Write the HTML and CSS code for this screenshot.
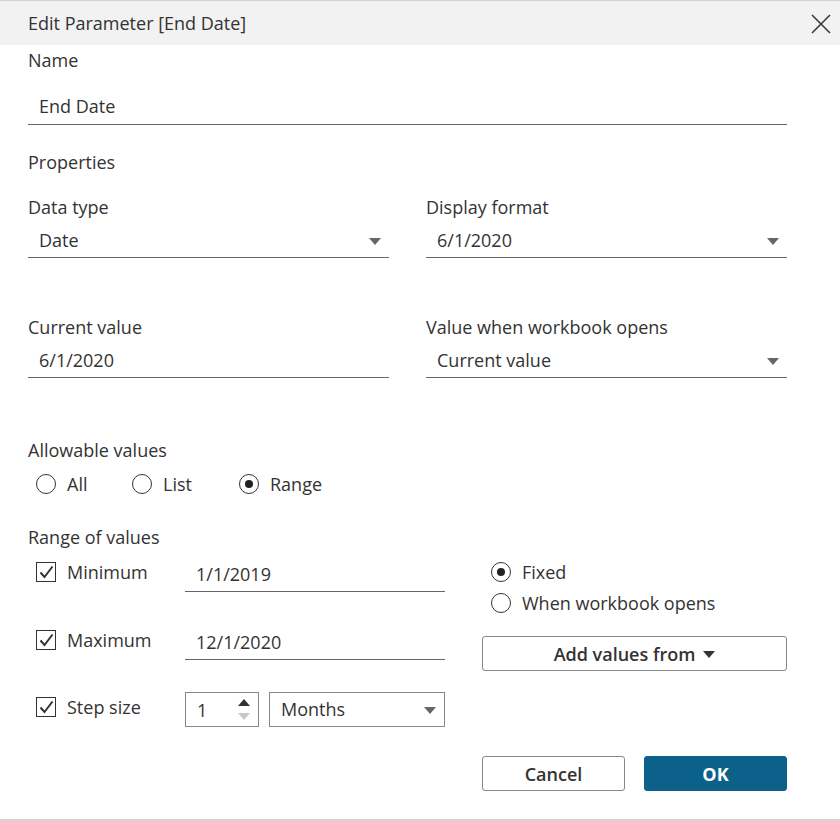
FILE: index.html
```html
<!DOCTYPE html>
<html>
<head>
<meta charset="utf-8">
<link rel="stylesheet" href="styles.css">
</head>
<body>
<div class="dialog">
  <div class="titlebar">
    <span class="title">Edit Parameter [End Date]</span>
    <svg class="close" width="22" height="22" viewBox="0 0 22 22"><path d="M2 2 L20 20 M20 2 L2 20" stroke="#333" stroke-width="1.5" fill="none"/></svg>
  </div>
  <div class="content">
    <div class="label l-name">Name</div>
    <div class="field f-name">End Date</div>
    <div class="label l-props">Properties</div>

    <div class="two-col c1">
      <div>
        <div class="label">Data type</div>
        <div class="field select">Date<span class="caret"></span></div>
      </div>
      <div>
        <div class="label">Display format</div>
        <div class="field select">6/1/2020<span class="caret"></span></div>
      </div>
    </div>

    <div class="two-col c2">
      <div>
        <div class="label">Current value</div>
        <div class="field">6/1/2020</div>
      </div>
      <div>
        <div class="label">Value when workbook opens</div>
        <div class="field select">Current value<span class="caret"></span></div>
      </div>
    </div>

    <div class="label l-allow">Allowable values</div>
    <div class="radios">
      <span class="radio-item"><span class="radio"></span>All</span>
      <span class="radio-item"><span class="radio"></span>List</span>
      <span class="radio-item"><span class="radio on"></span>Range</span>
    </div>

    <div class="label l-range">Range of values</div>
    <div class="range">
      <div class="range-left">
        <div class="rrow r1">
          <span class="check-item"><span class="check"><svg width="15" height="14" viewBox="0 0 15 14"><path d="M1.5 7.5 L5.5 12 L13.5 1.5" stroke="#333" stroke-width="2" fill="none"/></svg></span>Minimum</span>
          <div class="field rfield">1/1/2019</div>
        </div>
        <div class="rrow r2">
          <span class="check-item"><span class="check"><svg width="15" height="14" viewBox="0 0 15 14"><path d="M1.5 7.5 L5.5 12 L13.5 1.5" stroke="#333" stroke-width="2" fill="none"/></svg></span>Maximum</span>
          <div class="field rfield">12/1/2020</div>
        </div>
        <div class="rrow r3">
          <span class="check-item"><span class="check"><svg width="15" height="14" viewBox="0 0 15 14"><path d="M1.5 7.5 L5.5 12 L13.5 1.5" stroke="#333" stroke-width="2" fill="none"/></svg></span>Step size</span>
          <div class="step-controls">
            <div class="stepper"><span>1</span><span class="spin"><span class="up"></span><span class="down"></span></span></div>
            <div class="unit">Months<span class="caret"></span></div>
          </div>
        </div>
      </div>
      <div class="range-right">
        <span class="radio-item"><span class="radio on"></span>Fixed</span>
        <span class="radio-item ri2"><span class="radio"></span>When workbook opens</span>
        <button class="btn add">Add values from <span class="caret small"></span></button>
      </div>
    </div>

    <div class="actions">
      <button class="btn cancel">Cancel</button>
      <button class="btn ok">OK</button>
    </div>
  </div>
  <div class="bottom"></div>
</div>
</body>
</html>
```
FILE: styles.css
```css
* { box-sizing: border-box; }
html, body { margin: 0; padding: 0; background: #fff; }
body {
  font-family: "Open Sans", "Liberation Sans", sans-serif;
  font-size: 18px;
  color: #333;
  width: 840px;
  height: 821px;
  overflow: hidden;
}
.dialog {
  height: 821px;
  display: flex;
  flex-direction: column;
  border-top: 1px solid #d4d4d4;
}
.titlebar {
  height: 44px;
  background: #f2f2f2;
  display: flex;
  align-items: center;
  justify-content: space-between;
  padding: 0 8px 0 28px;
}
.title { line-height: 20px; }
.close { display: block; margin-top: 2px; }
.content {
  flex: 1;
  padding: 0 53px 0 28px;
}
.label { line-height: 20px; }
.l-name { margin-top: 5px; }
.field {
  height: 37px;
  border-bottom: 1px solid #666;
  padding-left: 11px;
  line-height: 36px;
  position: relative;
}
.f-name { margin-top: 18px; height: 37px; }
.l-props { margin-top: 27px; }
.two-col {
  display: grid;
  grid-template-columns: 361px 361px;
  column-gap: 37px;
}
.c1 { margin-top: 25px; }
.c2 { margin-top: 59px; }
.two-col .label { margin-bottom: 7px; }
.two-col .field { height: 34px; line-height: 32px; }
.caret {
  position: absolute;
  right: 8px;
  top: 50%;
  margin-top: -3px;
  width: 0; height: 0;
  border-left: 6px solid transparent;
  border-right: 6px solid transparent;
  border-top: 7px solid #666;
}
.l-allow { margin-top: 62px; }
.radios {
  margin-top: 14px;
  display: flex;
  padding-left: 8px;
}
.radio-item {
  display: inline-flex;
  align-items: center;
  line-height: 20px;
}
.radios .radio-item:nth-child(1) { width: 96px; }
.radios .radio-item:nth-child(2) { width: 107px; }
.radio {
  width: 20px; height: 20px;
  border: 1px solid #333;
  border-radius: 50%;
  margin-right: 11px;
  position: relative;
  flex: none;
}
.radio.on::after {
  content: "";
  position: absolute;
  left: 5px; top: 5px;
  width: 8px; height: 8px;
  border-radius: 50%;
  background: #222;
}
.l-range { margin-top: 33px; }
.range {
  display: flex;
  margin-top: 11px;
}
.range-left { width: 417px; }
.rrow {
  display: flex;
  align-items: center;
}
.r2 { margin-top: 34px; }
.r3 { margin-top: 32px; }
.check-item {
  width: 157px;
  display: inline-flex;
  align-items: center;
  padding-left: 8px;
  line-height: 20px;
  align-self: flex-start;
  margin-top: 4px;
}
.r3 .check-item { margin-top: 5px; }
.check {
  width: 20px; height: 20px;
  border: 1px solid #333;
  margin-right: 11px;
  display: flex;
  align-items: center;
  justify-content: center;
  flex: none;
}
.rfield {
  width: 260px;
  height: 34px;
  line-height: 32px;
}
.step-controls { display: flex; gap: 10px; }
.stepper {
  width: 74px; height: 35px;
  border: 1px solid #888;
  display: flex;
  align-items: center;
  justify-content: space-between;
  padding: 0 8px 0 11px;
}
.spin { display: flex; flex-direction: column; gap: 7px; }
.up {
  width: 0; height: 0;
  border-left: 6px solid transparent;
  border-right: 6px solid transparent;
  border-bottom: 7px solid #333;
}
.down {
  width: 0; height: 0;
  border-left: 6px solid transparent;
  border-right: 6px solid transparent;
  border-top: 7px solid #c8c8c8;
}
.unit {
  width: 176px; height: 35px;
  border: 1px solid #888;
  position: relative;
  padding-left: 11px;
  line-height: 33px;
}
.unit .caret { right: 8px; }
.range-right {
  width: 305px;
  margin-left: 37px;
  display: flex;
  flex-direction: column;
  align-items: flex-start;
  padding-top: 4px;
}
.range-right .radio-item { padding-left: 9px; }
.ri2 { margin-top: 11px; }
.btn {
  font-family: inherit;
  font-size: 18px;
  color: #333;
  background: #fff;
  border: 1px solid #888;
  border-radius: 3px;
  height: 35px;
  padding: 0;
  cursor: pointer;
}
.add {
  width: 305px;
  margin-top: 23px;
  font-weight: 600;
  display: flex;
  align-items: center;
  justify-content: center;
}
.caret.small {
  position: static;
  margin: 2px 0 0 8px;
  border-top: 7px solid #333;
}
.actions {
  display: flex;
  justify-content: flex-end;
  gap: 19px;
  margin-top: 29px;
}
.cancel { width: 143px; font-weight: 600; }
.ok {
  width: 143px;
  background: #0b6189;
  border-color: #0b6189;
  color: #fff;
  font-weight: 700;
}
.bottom {
  height: 2px;
  background: #d4d4d4;
}
```
